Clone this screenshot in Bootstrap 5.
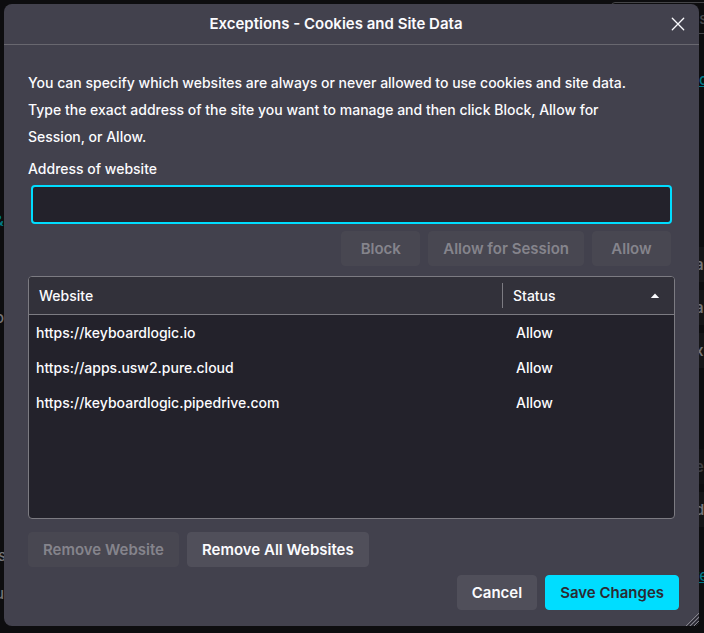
<!DOCTYPE html>
<html lang="en">
<head>
<meta charset="utf-8">
<meta name="viewport" content="width=device-width, initial-scale=1">
<title>Exceptions - Cookies and Site Data</title>
<link href="https://cdn.jsdelivr.net/npm/bootstrap@5.3.0/dist/css/bootstrap.min.css" rel="stylesheet">
<style>
  body { background: #0d0d0f; color: #fbfbfe; font-family: Inter, "Liberation Sans", sans-serif; font-size: 14px; font-weight: 500; line-height: 27px; min-height: 100vh; }

  /* settings page behind the dialog */
  .backdrop-page { position: absolute; inset: 0; overflow: hidden; color: #747477; font-size: 15px; }
  .backdrop-page > * { position: absolute; line-height: 20px; white-space: nowrap; }
  .page-link-bit { color: #007a88; }
  .page-search { top: 2px; right: -40px; width: 133px; height: 32px; border: 1px solid #454548; border-radius: 4px; color: #48484b; line-height: 32px; padding-left: 78px; }
  .page-btn { right: -30px; width: 60px; height: 35px; background: #151517; font-weight: 600; padding: 8px 0 0 21px; }
  .page-btn-dim { color: #3c3c3f; background: #111113; }

  .dialog-box { position: relative; background: #42414d; border-radius: 8px; margin: 4px 5px 7px 4px; min-height: calc(100vh - 11px); }
  .dialog-title { height: 41px; border-bottom: 1px solid #68676f; padding-right: 11px; }
  .dialog-title h1 { font-size: 15px; font-weight: 600; }
  .close-btn { width: 20px; height: 20px; color: #fbfbfe; }
  .dialog-main { padding: 24px 24px 8px; }
  .intro-text { margin-bottom: 5px; padding-right: 24px; }
  .address-label { margin-bottom: 3px; }
  .address-wrap { padding: 0 3px; }
  .address-input, .address-input:focus { height: 39px; background: #23222b; border: 2px solid #00ddff; border-radius: 4px; color: #fbfbfe; box-shadow: none; }
  .btn-row { padding: 7px 4px 10px; }
  .dlg-btn { --bs-btn-font-size: 15px; --bs-btn-font-weight: 600; --bs-btn-line-height: 21px; --bs-btn-padding-x: 14px; --bs-btn-padding-y: 6px;
    --bs-btn-color: #fbfbfe; --bs-btn-bg: #504f5a; --bs-btn-border-color: #504f5a; --bs-btn-hover-color: #fbfbfe; --bs-btn-hover-bg: #5b5b66;
    --bs-btn-disabled-color: #85848c; --bs-btn-disabled-bg: #484751; --bs-btn-disabled-border-color: #484751; --bs-btn-disabled-opacity: 1;
    --bs-btn-border-radius: 4px; min-width: 79px; white-space: nowrap; }
  .dlg-btn-primary { --bs-btn-color: #2b2a33; --bs-btn-bg: #00ddff; --bs-btn-border-color: #00ddff; --bs-btn-hover-color: #2b2a33; --bs-btn-hover-bg: #80ebff; }
  .site-list { background: #23222b; border: 1px solid #7c7b82; border-radius: 4px; min-height: 243px; }
  .site-table { --bs-table-bg: transparent; --bs-table-color: #fbfbfe; table-layout: fixed; line-height: 21px; }
  .site-table > :not(caption) > * > * { border: 0; padding: 7px; }
  .site-table > thead > tr > th { background: #32313a; border-bottom: 1px solid #7c7b82; padding: 8px 10px; font-weight: 500; }
  .site-table > thead > tr > th:last-child { padding: 6px 14px 6px 0; }
  .site-table > tbody td:last-child { padding-left: 14px; }
  .status-col { width: 172px; }
  .status-head { border-left: 1px solid #7c7b82; padding-left: 10px; line-height: 25px; }
  .remove-row { padding-top: 13px; }
  .dialog-foot { padding: 0 20px 16px; }
  .resize-grip { right: 0; bottom: 0; }
</style>
</head>
<body>
<div class="backdrop-page" aria-hidden="true">
  <span class="page-link-bit" style="left:-6px;top:211px">&amp;</span>
  <span style="left:-5px;top:308px">o</span>
  <span style="left:-11px;top:546px">us</span>
  <span style="left:-5px;top:584px">u</span>
  <div class="page-search">gs</div>
  <u class="page-link-bit" style="right:-4px;top:70px">o</u>
  <div class="page-btn" style="top:247px">a</div>
  <div class="page-btn" style="top:290px">a</div>
  <div class="page-btn" style="top:333px">x</div>
  <div class="page-btn page-btn-dim" style="top:449px">e</div>
  <div class="page-btn" style="top:492px">d</div>
  <u class="page-link-bit" style="right:-4px;top:566px">re</u>
</div>

<main class="dialog-box d-flex flex-column" role="dialog" aria-labelledby="dlgTitle">
  <header class="dialog-title d-flex align-items-center">
    <h1 id="dlgTitle" class="m-0 flex-grow-1 text-center">Exceptions - Cookies and Site Data</h1>
    <button type="button" class="close-btn btn p-0 border-0 d-flex align-items-center justify-content-center" aria-label="Close">
      <svg width="14" height="14" viewBox="0 0 14 14" fill="none" stroke="currentColor" stroke-width="1.3" stroke-linecap="round"><path d="M1.3 1.3l11.4 11.4M12.7 1.3L1.3 12.7"/></svg>
    </button>
  </header>

  <div class="dialog-main d-flex flex-column flex-grow-1">
    <p class="intro-text">You can specify which websites are always or never allowed to use cookies and site data. Type the exact address of the site you want to manage and then click Block, Allow for Session, or Allow.</p>
    <label class="address-label" for="url">Address of website</label>
    <div class="address-wrap"><input id="url" type="text" class="address-input form-control"></div>
    <div class="btn-row d-flex justify-content-end gap-2">
      <button type="button" class="btn dlg-btn" disabled>Block</button>
      <button type="button" class="btn dlg-btn" disabled>Allow for Session</button>
      <button type="button" class="btn dlg-btn" disabled>Allow</button>
    </div>

    <div class="site-list flex-grow-1 overflow-hidden">
      <table class="site-table table mb-0">
        <colgroup><col><col class="status-col"></colgroup>
        <thead>
          <tr>
            <th scope="col">Website</th>
            <th scope="col" aria-sort="ascending">
              <div class="status-head d-flex align-items-center justify-content-between">Status
                <svg width="10" height="6" viewBox="0 0 10 6" fill="#fbfbfe"><path d="M5 .5L9.2 5H.8z"/></svg>
              </div>
            </th>
          </tr>
        </thead>
        <tbody>
          <tr><td>https://keyboardlogic.io</td><td>Allow</td></tr>
          <tr><td>https://apps.usw2.pure.cloud</td><td>Allow</td></tr>
          <tr><td>https://keyboardlogic.pipedrive.com</td><td>Allow</td></tr>
        </tbody>
      </table>
    </div>

    <div class="remove-row d-flex gap-2">
      <button type="button" class="btn dlg-btn" disabled>Remove Website</button>
      <button type="button" class="btn dlg-btn">Remove All Websites</button>
    </div>
  </div>

  <footer class="dialog-foot d-flex justify-content-end gap-2">
    <button type="button" class="btn dlg-btn">Cancel</button>
    <button type="button" class="btn dlg-btn dlg-btn-primary">Save Changes</button>
  </footer>
  <svg class="resize-grip position-absolute" width="14" height="14" viewBox="0 0 14 14" fill="none"><path d="M1 14L14 1M5 14L14 5M9 14L14 9" stroke="#85848c"/><path d="M3 14L14 3M7 14L14 7M11 14L14 11" stroke="#24232b"/></svg>
</main>
<script src="https://cdn.jsdelivr.net/npm/bootstrap@5.3.0/dist/js/bootstrap.bundle.min.js"></script>
</body>
</html>
